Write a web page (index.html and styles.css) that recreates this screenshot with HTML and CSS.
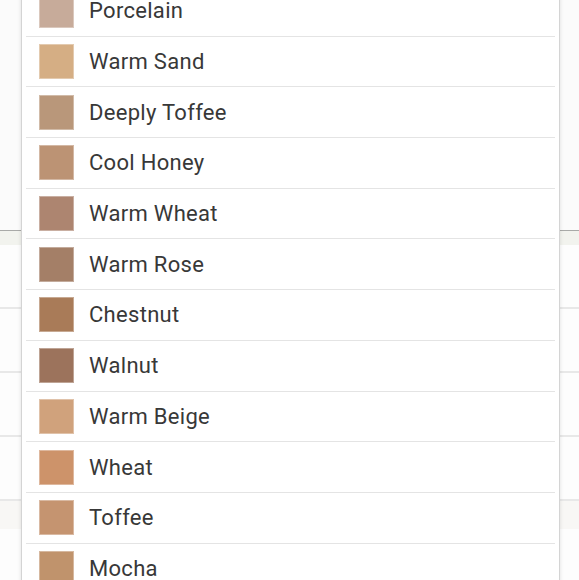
FILE: index.html
```html
<!DOCTYPE html>
<html>
<head>
<meta charset="utf-8">
<link rel="stylesheet" href="styles.css">
</head>
<body>
<div class="page">
  <div class="page-top"></div>
  <div class="page-head"></div>
  <div class="page-row"></div>
  <div class="page-row"></div>
  <div class="page-row"></div>
  <div class="page-row"></div>
  <div class="page-band"></div>
  <div class="page-rest"></div>

  <div class="dropdown">
    <ul class="options">
      <li class="option"><span class="swatch" style="background:#c7ab9a"></span><span class="label">Porcelain</span></li>
      <li class="option"><span class="swatch" style="background:#d5ae84"></span><span class="label">Warm Sand</span></li>
      <li class="option"><span class="swatch" style="background:#b9977a"></span><span class="label">Deeply Toffee</span></li>
      <li class="option"><span class="swatch" style="background:#bc9374"></span><span class="label">Cool Honey</span></li>
      <li class="option"><span class="swatch" style="background:#ad8570"></span><span class="label">Warm Wheat</span></li>
      <li class="option"><span class="swatch" style="background:#a47f67"></span><span class="label">Warm Rose</span></li>
      <li class="option"><span class="swatch" style="background:#a97b58"></span><span class="label">Chestnut</span></li>
      <li class="option"><span class="swatch" style="background:#9c735c"></span><span class="label">Walnut</span></li>
      <li class="option"><span class="swatch" style="background:#d0a27c"></span><span class="label">Warm Beige</span></li>
      <li class="option"><span class="swatch" style="background:#cd936a"></span><span class="label">Wheat</span></li>
      <li class="option"><span class="swatch" style="background:#c59470"></span><span class="label">Toffee</span></li>
      <li class="option"><span class="swatch" style="background:#c0936c"></span><span class="label">Mocha</span></li>
    </ul>
  </div>
</div>
</body>
</html>
```

FILE: styles.css
```css
* { box-sizing: border-box; }
html, body {
  margin: 0;
  padding: 0;
  background: #fbfbfb;
  font-family: Roboto, "Liberation Sans", sans-serif;
  overflow: hidden;
}
.page {
  position: relative;
  width: 579px;
  height: 580px;
  overflow: hidden;
  display: flex;
  flex-direction: column;
}
.page-top {
  height: 230px;
  background: #fbfbfb;
  flex: none;
}
.page-head {
  height: 15px;
  border-top: 1px solid #a9aaa8;
  background: #f2f3ee;
  flex: none;
}
.page-row {
  height: 64px;
  border-bottom: 2px solid #e8e8e8;
  background: #fdfdfd;
  flex: none;
}
.page-band {
  height: 28px;
  background: #f8f7f5;
  flex: none;
}
.page-rest {
  flex: 1;
  background: #fdfdfd;
}
.dropdown {
  position: absolute;
  left: 21px;
  top: -15px;
  width: 539px;
  background: #fff;
  border: 1px solid #d4d4d4;
  box-shadow: 0 0 4px rgba(0, 0, 0, 0.12);
}
.options {
  list-style: none;
  margin: 0;
  padding: 0;
}
.option {
  display: flex;
  align-items: center;
  gap: 15px;
  height: 50.7px;
  margin: 0 4px;
  padding-left: 13px;
  border-bottom: 1px solid #e4e4e4;
}
.swatch {
  width: 35px;
  height: 35px;
  flex: none;
  border: 1px solid rgba(255, 255, 255, 0.35);
  background-clip: padding-box;
}
.label {
  font-size: 22px;
  color: #383838;
  letter-spacing: 0.3px;
}
```
